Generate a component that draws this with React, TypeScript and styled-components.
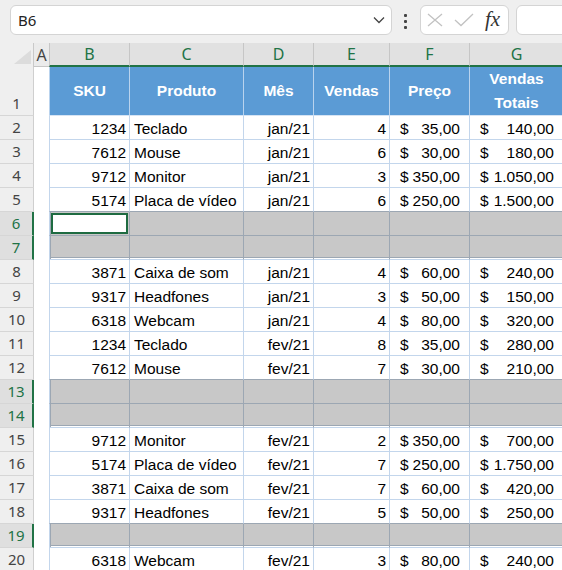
import React from "react"
import styled, { createGlobalStyle, css } from "styled-components"

const COLS = "34px 15px 80px 114px 70px 76px 80px 94px"
const SEL = "#9ca7b3"
const LINE = "#c3d6ec"
const GREEN = "#217346"

const GlobalStyle = createGlobalStyle`
  html, body {
    margin: 0;
    padding: 0;
    background: #fff;
    overflow: hidden;
  }
  body {
    font-family: "Liberation Sans", Arial, sans-serif;
  }
`

type RowData = {
  n: number
  sel?: boolean
  active?: boolean
  d?: [string, string, string, string, string, string]
}

const rows: RowData[] = [
  { n: 2, d: ["1234", "Teclado", "jan/21", "4", "35,00", "140,00"] },
  { n: 3, d: ["7612", "Mouse", "jan/21", "6", "30,00", "180,00"] },
  { n: 4, d: ["9712", "Monitor", "jan/21", "3", "350,00", "1.050,00"] },
  { n: 5, d: ["5174", "Placa de vídeo", "jan/21", "6", "250,00", "1.500,00"] },
  { n: 6, sel: true, active: true },
  { n: 7, sel: true },
  { n: 8, d: ["3871", "Caixa de som", "jan/21", "4", "60,00", "240,00"] },
  { n: 9, d: ["9317", "Headfones", "jan/21", "3", "50,00", "150,00"] },
  { n: 10, d: ["6318", "Webcam", "jan/21", "4", "80,00", "320,00"] },
  { n: 11, d: ["1234", "Teclado", "fev/21", "8", "35,00", "280,00"] },
  { n: 12, d: ["7612", "Mouse", "fev/21", "7", "30,00", "210,00"] },
  { n: 13, sel: true },
  { n: 14, sel: true },
  { n: 15, d: ["9712", "Monitor", "fev/21", "2", "350,00", "700,00"] },
  { n: 16, d: ["5174", "Placa de vídeo", "fev/21", "7", "250,00", "1.750,00"] },
  { n: 17, d: ["3871", "Caixa de som", "fev/21", "7", "60,00", "420,00"] },
  { n: 18, d: ["9317", "Headfones", "fev/21", "5", "50,00", "250,00"] },
  { n: 19, sel: true },
  { n: 20, d: ["6318", "Webcam", "fev/21", "3", "80,00", "240,00"] },
]

const headers = ["SKU", "Produto", "Mês", "Vendas", "Preço", "Vendas\nTotais"]
const letters = ["B", "C", "D", "E", "F", "G"]

export default function App() {
  return (
    <Page>
      <GlobalStyle />
      <TopBar>
        <NameBox>
          <span>B6</span>
          <svg width="12" height="8" viewBox="0 0 12 8">
            <path d="M1 1.5 L6 6.5 L11 1.5" fill="none" stroke="#444" strokeWidth="1.3" />
          </svg>
        </NameBox>
        <Dots>
          <i />
          <i />
          <i />
        </Dots>
        <FxBox>
          <svg width="16" height="14" viewBox="0 0 16 14">
            <path d="M1 1 L15 13 M15 1 L1 13" stroke="#c2c2c2" strokeWidth="1.3" />
          </svg>
          <svg width="20" height="14" viewBox="0 0 20 14">
            <path d="M1 7 L7 12.5 L19 1" fill="none" stroke="#c2c2c2" strokeWidth="1.3" />
          </svg>
          <FxLabel>fx</FxLabel>
        </FxBox>
        <FormulaInput />
      </TopBar>

      <GridRow $h={24}>
        <Corner />
        <ColHead>A</ColHead>
        {letters.map((l) => (
          <ColHead key={l} $sel>
            {l}
          </ColHead>
        ))}
      </GridRow>

      <GridRow $h={49}>
        <RowHead>1</RowHead>
        <Blank />
        {headers.map((h) => (
          <HeadCell key={h}>{h}</HeadCell>
        ))}
      </GridRow>

      {rows.map((r, i) => {
        const next = rows[i + 1]
        const selNext = !!next?.sel
        const last = !!r.sel && !selNext
        return (
          <GridRow key={r.n} $h={24}>
            <RowHead $sel={r.sel}>{r.n}</RowHead>
            <Blank />
            {r.d ? (
              <>
                <Cell $align="right" $selNext={selNext}>{r.d[0]}</Cell>
                <Cell $align="left" $selNext={selNext}>{r.d[1]}</Cell>
                <Cell $align="right" $selNext={selNext}>{r.d[2]}</Cell>
                <Cell $align="right" $selNext={selNext}>{r.d[3]}</Cell>
                <Money $selNext={selNext}>
                  <span>$</span>
                  <span>{r.d[4]}</span>
                </Money>
                <Money $selNext={selNext}>
                  <span>$</span>
                  <span>{r.d[5]}</span>
                </Money>
              </>
            ) : (
              letters.map((l, c) => (
                <Cell key={l} $sel $first={c === 0} $last={last} $selNext={selNext}>
                  {r.active && c === 0 && <ActiveBox />}
                </Cell>
              ))
            )}
          </GridRow>
        )
      })}
    </Page>
  )
}

const Page = styled.div`
  width: 562px;
  overflow: hidden;
`

const TopBar = styled.div`
  display: flex;
  align-items: flex-start;
  height: 43px;
  box-sizing: border-box;
  padding: 5px 0 0 10px;
  background: #efefef;
`

const Box = styled.div`
  height: 30px;
  box-sizing: border-box;
  border: 1px solid #d4d4d4;
  border-radius: 6px;
  background: #fff;
  display: flex;
  align-items: center;
  flex: none;
`

const NameBox = styled(Box)`
  width: 382px;
  justify-content: space-between;
  padding: 0 6px 0 7px;
  font-family: "Noto Sans", "Open Sans", sans-serif;
  font-size: 15px;
  color: #222;
`

const Dots = styled.div`
  display: flex;
  flex-direction: column;
  gap: 3px;
  margin: 9px 13px 0 12px;
  i {
    display: block;
    width: 3px;
    height: 3px;
    border-radius: 1px;
    background: #444;
  }
`

const FxBox = styled(Box)`
  width: 89px;
  padding-left: 6px;
  gap: 11px;
`

const FxLabel = styled.span`
  font-family: "Liberation Serif", "Times New Roman", serif;
  font-style: italic;
  font-size: 21px;
  color: #333;
  line-height: 1;
  margin-top: -2px;
`

const FormulaInput = styled(Box)`
  width: 70px;
  margin-left: 7px;
`

const GridRow = styled.div<{ $h: number }>`
  display: grid;
  grid-template-columns: ${COLS};
  height: ${(p) => p.$h}px;
`

const Corner = styled.div`
  position: relative;
  background: #efefef;
  border-right: 1px solid #c9c9c9;
  &::after {
    content: "";
    position: absolute;
    right: 2px;
    bottom: 3px;
    width: 17px;
    height: 14px;
    background: #dcdcdc;
    clip-path: polygon(100% 0, 100% 100%, 0 100%);
  }
`

const ColHead = styled.div<{ $sel?: boolean }>`
  display: flex;
  align-items: center;
  justify-content: center;
  box-sizing: border-box;
  font-family: "Noto Sans", "Open Sans", sans-serif;
  font-size: 16px;
  background: ${(p) => (p.$sel ? "#e1e1e1" : "#ebebeb")};
  color: ${(p) => (p.$sel ? GREEN : "#444")};
  border-left: 1px solid #c6c6c6;
  border-bottom: ${(p) => (p.$sel ? `2px solid ${GREEN}` : "1px solid #c6c6c6")};
  &:nth-child(2) {
    border-left: none;
  }
`

const RowHead = styled.div<{ $sel?: boolean }>`
  display: flex;
  align-items: flex-end;
  justify-content: center;
  box-sizing: border-box;
  padding-bottom: 1px;
  line-height: 22px;
  font-family: "Noto Sans", "Open Sans", sans-serif;
  font-size: 15px;
  background: ${(p) => (p.$sel ? "#dfdfdf" : "#efefef")};
  color: ${(p) => (p.$sel ? GREEN : "#444")};
  border-bottom: 1px solid #d6d6d6;
  border-right: ${(p) => (p.$sel ? `2px solid ${GREEN}` : "1px solid #cfcfcf")};
`

const Blank = styled.div`
  background: #fff;
`

const HeadCell = styled.div`
  display: flex;
  align-items: center;
  justify-content: center;
  text-align: center;
  white-space: pre-line;
  box-sizing: border-box;
  background: #5b9bd5;
  color: #fff;
  font-weight: bold;
  font-size: 15.5px;
  line-height: 24px;
  border-left: 1px solid #b9d3ee;
  border-bottom: 1px solid #d6e4f4;
`

const Cell = styled.div<{
  $align?: "left" | "right"
  $sel?: boolean
  $first?: boolean
  $last?: boolean
  $selNext?: boolean
}>`
  display: flex;
  align-items: flex-end;
  justify-content: ${(p) => (p.$align === "left" ? "flex-start" : "flex-end")};
  box-sizing: border-box;
  padding: 0 3px 1px 4px;
  font-size: 15.5px;
  color: #000;
  white-space: nowrap;
  background: #fff;
  border-left: 1px solid ${LINE};
  border-bottom: 1px solid ${(p) => (p.$selNext && !(p.$sel && p.$last) ? SEL : LINE)};
  ${(p) =>
    p.$sel &&
    css`
      align-items: stretch;
      padding: 0;
      background: #c8c8c8;
      border-left-color: ${p.$first ? LINE : SEL};
      border-bottom-color: ${p.$last ? LINE : SEL};
      box-shadow: ${[
        p.$first ? `inset 1px 0 0 ${SEL}` : "",
        p.$last ? `inset 0 -1px 0 #fff, inset 0 -2px 0 ${SEL}` : "",
      ]
        .filter(Boolean)
        .join(", ") || "none"};
    `}
`

const Money = styled(Cell)`
  justify-content: space-between;
  padding: 0 9px 1px 10px;
`

const ActiveBox = styled.div`
  flex: 1;
  margin: 1px;
  box-sizing: border-box;
  border: 2px solid #1e6b41;
  background: #fff;
`
